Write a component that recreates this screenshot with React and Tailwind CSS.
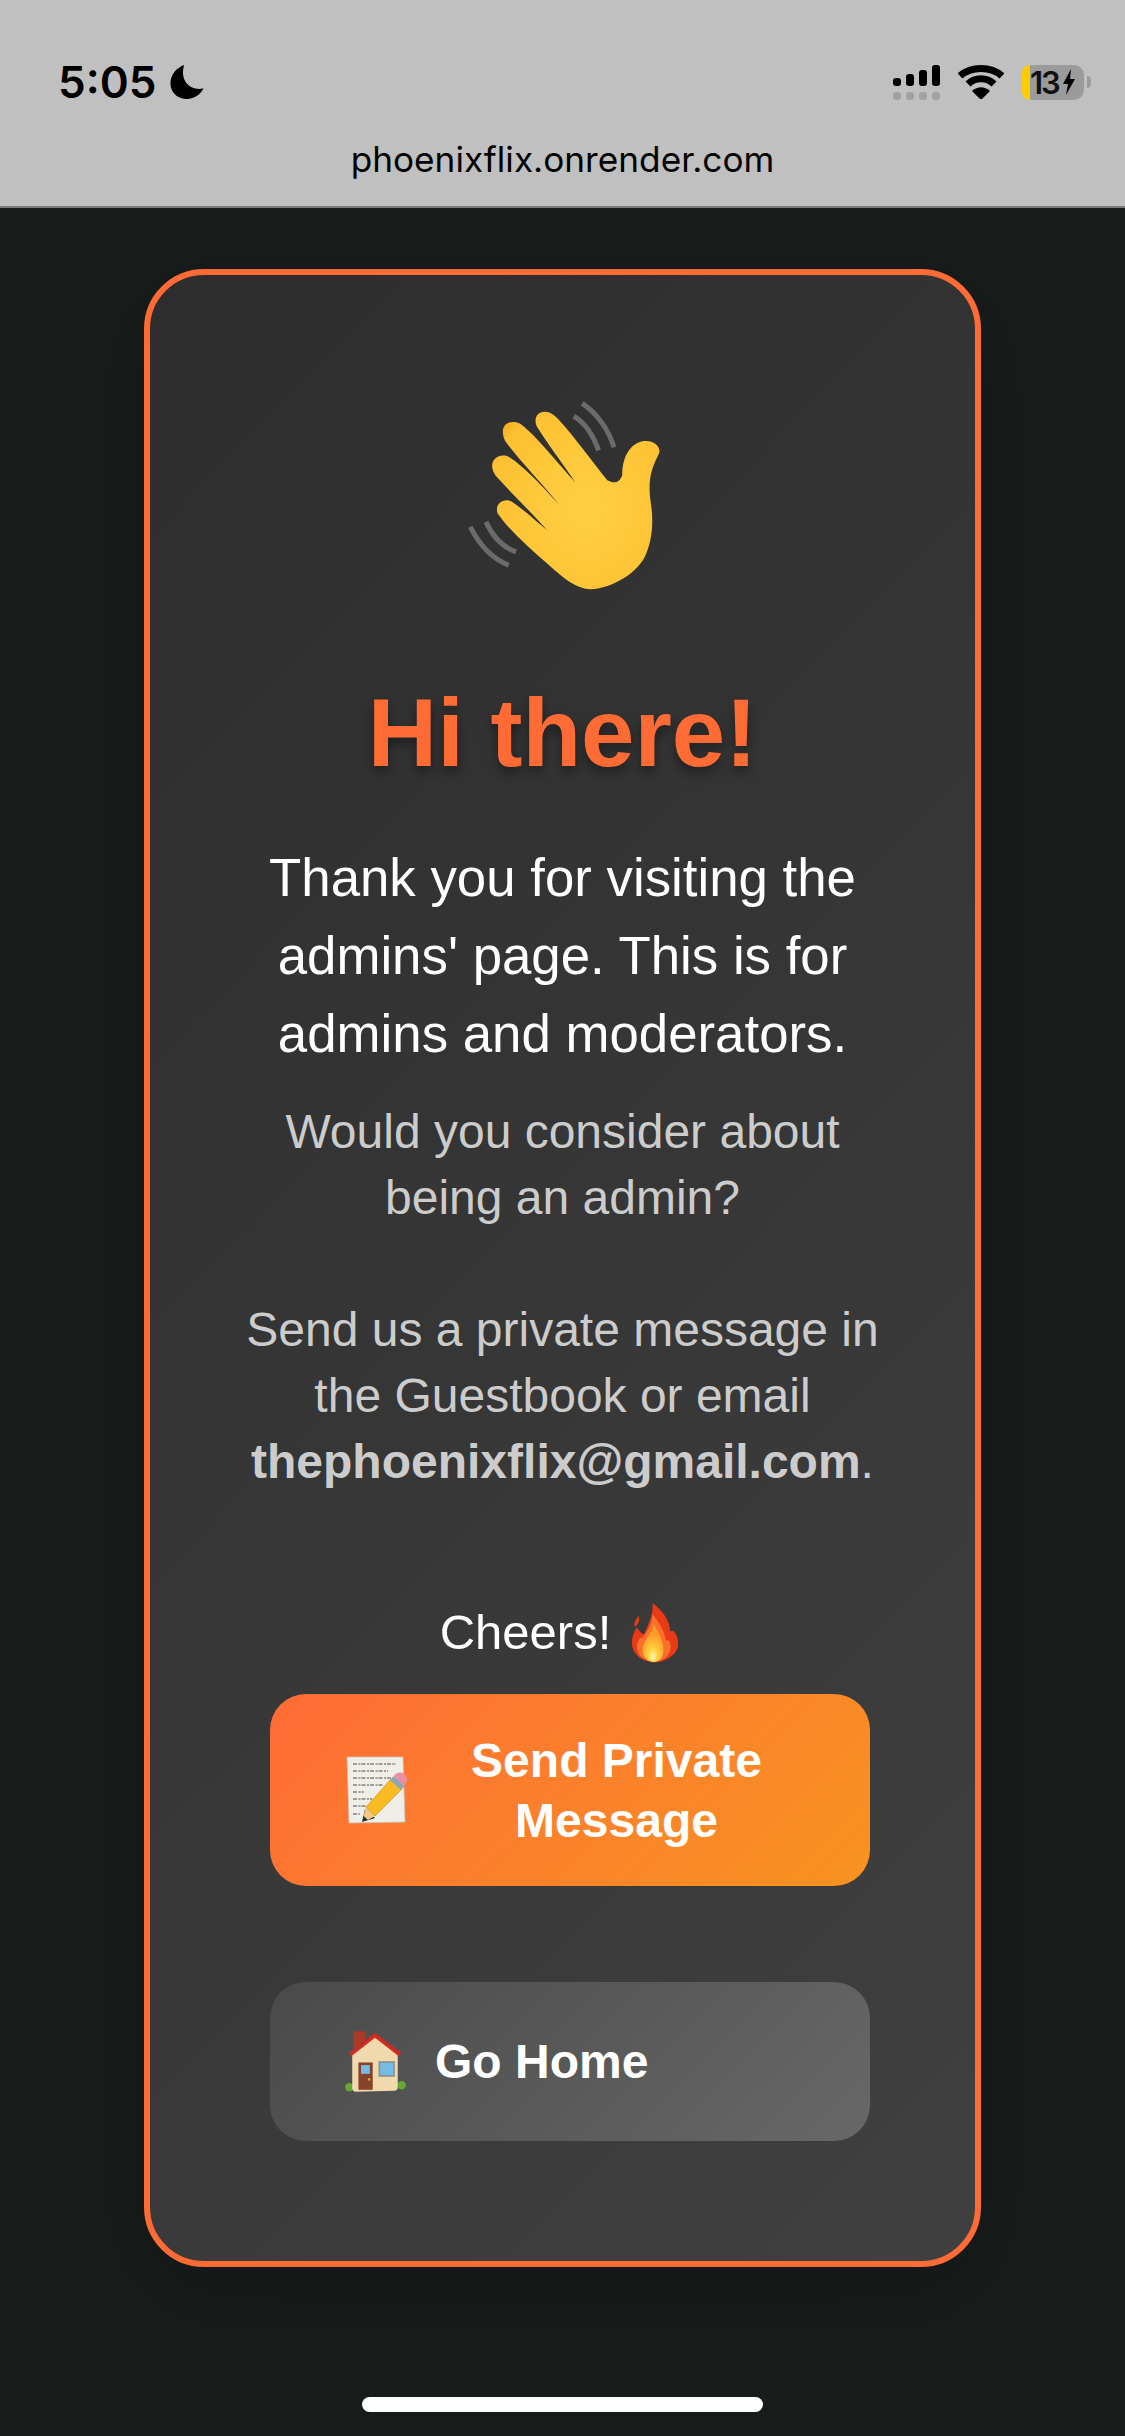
const Hand = () => (
  <svg viewBox="140 95 590 575" className="w-[197px] h-[192px] ml-[5px]">
    <defs>
      <radialGradient id="hg" cx="0.56" cy="0.54" r="0.72">
        <stop offset="0" stopColor="#ffd044" />
        <stop offset="0.84" stopColor="#fdc032" />
        <stop offset="1" stopColor="#ef9f14" />
      </radialGradient>
    </defs>
    <g fill="none" stroke="#6b6b6b" strokeWidth="15">
      <path d="M150 475 C175 525 215 570 265 590" />
      <path d="M197 460 C215 500 245 535 287 550" />
      <path d="M485 105 C530 135 565 185 580 237" />
      <path d="M460 143 C495 165 520 205 534 246" />
    </g>
    <path
      fill="url(#hg)"
      d="M232 435 C222 410 245 388 272 398 C300 415 350 460 382 487 C340 440 270 370 226 322 C200 285 225 255 258 262 C290 275 360 345 415 408 C370 350 290 270 254 217 C235 175 260 155 290 162 C320 170 400 270 465 342 C430 290 370 210 348 172 C335 135 370 120 395 137 C420 150 500 260 560 335 C580 345 595 345 605 320 C605 270 625 225 670 218 C700 215 722 235 715 255 C695 295 680 330 690 400 C700 460 695 520 670 570 C640 620 570 660 510 662 C460 660 420 620 380 585 C330 540 270 490 232 435 Z"
    />
  </svg>
);

const Flame = () => (
  <svg viewBox="55 30 155 190" className="w-[52px] h-[63px]">
    <defs>
      <radialGradient id="fg" cx="0.5" cy="0.85" r="0.6">
        <stop offset="0" stopColor="#fff8c0" />
        <stop offset="0.35" stopColor="#ffd23c" />
        <stop offset="1" stopColor="#ff9a2a" />
      </radialGradient>
    </defs>
    <path fill="#e83a16" d="M125 36 C150 55 178 85 178 122 C190 112 205 140 202 165 C198 195 160 215 130 215 C100 215 65 195 63 160 C62 135 72 118 78 110 C85 120 92 130 100 130 C112 100 128 75 125 36 Z" />
    <path fill="#e83a16" d="M83 75 C88 90 82 100 72 108 C66 100 74 85 83 75 Z" />
    <path fill="#f9702a" d="M125 70 C145 95 162 120 165 150 C175 145 180 155 180 170 C178 195 155 213 130 213 C100 213 78 195 78 168 C78 150 88 140 95 140 C105 125 122 110 125 70 Z" />
    <path fill="url(#fg)" d="M128 100 C145 125 158 150 158 178 C158 200 145 214 130 214 C110 214 95 198 95 178 C95 150 120 135 128 100 Z" />
  </svg>
);

const Memo = () => (
  <svg viewBox="0 0 62 68" className="w-[62px] h-[68px]">
    <path fill="#efeee9" stroke="#c9c4b8" strokeWidth="0.8" d="M1 1 L57 1 L59 66 L3 67 Z" />
    <g fill="none" stroke="#4c4a46" strokeWidth="1" strokeDasharray="4 1.5 2 1">
      <path d="M7 8 H50" /><path d="M7 15 H42" /><path d="M7 22 H50" /><path d="M7 29 H38" /><path d="M7 36 H18" /><path d="M7 43 H26" /><path d="M7 50 H20" /><path d="M7 58 H14" />
    </g>
    <path fill="#2d2a26" d="M16 66 L19 53 L29 62 Z" />
    <path fill="#efc98a" d="M17.5 60 L20 51 L29 60 L22 64 Z" />
    <path fill="#f9bb22" stroke="#c98a10" strokeWidth="0.6" d="M20 51 L45 23 L56 33 L29 60 Z" />
    <path fill="#8fa7b5" d="M44 24 L48 20 L59 30 L55 34 Z" />
    <path fill="#ea8f9b" d="M48 20 C52 15 57 16 60 20 C62 24 61 26 58 30 Z" />
  </svg>
);

const House = () => (
  <svg viewBox="40 45 190 200" className="w-[62px] h-[65px]">
    <circle cx="56" cy="224" r="13" fill="#66a82e" />
    <circle cx="217" cy="218" r="13" fill="#66a82e" />
    <rect x="68" y="52" width="36" height="50" fill="#a83a26" />
    <path fill="#f1d9ae" d="M65 120 L135 65 L205 120 L205 225 C205 232 200 235 195 235 L75 238 C70 238 65 234 65 228 Z" />
    <path fill="none" stroke="#d42c22" strokeWidth="13" strokeLinejoin="miter" d="M58 124 L135 64 L212 124" />
    <path fill="none" stroke="#3d3b38" strokeWidth="2" d="M52 130 L135 57 L218 130" opacity="0.5" />
    <rect x="84" y="148" width="44" height="84" fill="#85432a" />
    <rect x="92" y="156" width="27" height="27" fill="#74bce4" />
    <circle cx="117" cy="200" r="4" fill="#e0a83a" />
    <rect x="146" y="144" width="50" height="48" fill="#8c8f92" />
    <rect x="151" y="149" width="40" height="38" fill="#74bce4" />
  </svg>
);

export default function App() {
  return (
    <div className="w-[1125px] h-[2436px] flex flex-col bg-[#181d1c] overflow-hidden relative" style={{ fontFamily: '"Liberation Sans", Arial, sans-serif' }}>
      <header className="h-[208px] shrink-0 bg-[#c0c0c0] border-b-2 border-[#777b7a] relative">
        <div className="flex items-center justify-between pl-[58px] pr-[34px] pt-[60px] h-[104px]">
          <div className="flex items-center gap-[14px] text-black">
            <span className="text-[44px] leading-[44px] font-semibold" style={{ fontFamily: 'Inter, sans-serif' }}>5:05</span>
            <svg viewBox="0 0 34 36" className="w-[34px] h-[35px]">
              <path fill="#000" d="M14 0 C6 3 0 10 0 19 C0 28 7 35 17 35 C25 35 31 30 34 24 C22 27 9 18 14 0 Z" />
            </svg>
          </div>
          <div className="flex items-center gap-[18px]">
            <svg viewBox="0 0 47 35" className="w-[47px] h-[35px]">
              <rect x="0" y="13" width="8" height="8" rx="3" fill="#000" />
              <rect x="13" y="9" width="8" height="12" rx="3" fill="#000" />
              <rect x="26" y="5" width="8" height="16" rx="3" fill="#000" />
              <rect x="39" y="0" width="8" height="21" rx="3" fill="#000" />
              <rect x="0" y="27" width="8" height="8" rx="3" fill="#a2a2a2" />
              <rect x="13" y="27" width="8" height="8" rx="3" fill="#a2a2a2" />
              <rect x="26" y="27" width="8" height="8" rx="3" fill="#a2a2a2" />
              <rect x="39" y="27" width="8" height="8" rx="3" fill="#a2a2a2" />
            </svg>
            <svg viewBox="0 0 46 34" className="w-[46px] h-[34px]">
              <path fill="none" stroke="#000" strokeWidth="7" d="M2 11 C13 1 33 1 44 11" />
              <path fill="none" stroke="#000" strokeWidth="7" d="M10 19 C17 12 29 12 36 19" />
              <path fill="#000" d="M14 26 C20 21 26 21 32 26 L23 35 Z" />
            </svg>
            <div className="flex items-center gap-[3px]">
              <div className="w-[62px] h-[35px] rounded-[10px] bg-[#9b9b9b] flex items-center">
                <div className="w-[8px] h-full shrink-0 rounded-l-[10px] bg-[#ffcc00]" />
                <span className="text-[31px] leading-none font-semibold text-[#111] tracking-[-2px]" style={{ fontFamily: 'Inter, sans-serif' }}>13</span>
                <svg viewBox="0 0 14 26" className="w-[14px] h-[26px] ml-[3px] shrink-0">
                  <path fill="#000" d="M9 0 L1 15 L6 15 L4 26 L13 10 L8 10 Z" />
                </svg>
              </div>
              <div className="w-[4px] h-[12px] rounded-r-[4px] bg-[#9b9b9b]" />
            </div>
          </div>
        </div>
        <div className="text-center text-black text-[35.2px] leading-[44px] mt-[33px]" style={{ fontFamily: 'Inter, sans-serif' }}>phoenixflix.onrender.com</div>
      </header>

      <main className="flex-1 pl-[144px] pt-[61px]">
        <div className="w-[837px] h-[1998px] rounded-[60px] border-[6px] border-[#ff6b35] bg-linear-135 from-[#2d2d2d] to-[#404040] shadow-[0_24px_90px_rgba(0,0,0,0.22)] flex flex-col items-center pt-[125px]">
          <Hand />
          <h1 className="mt-[86px] text-[96px] leading-[110px] font-bold text-[#ff6b35] [text-shadow:0_6px_12px_rgba(0,0,0,0.4)]">Hi there!</h1>
          <p className="mt-[51px] w-[640px] text-center text-[52.8px] leading-[78px] text-white">
            Thank you for visiting the admins' page. This is for admins and moderators.
          </p>
          <p className="mt-[26px] w-[640px] text-center text-[48px] leading-[66px] text-[#cccccc]">
            Would you consider about being an admin?
          </p>
          <p className="mt-[66px] w-[640px] text-center text-[48px] leading-[66px] text-[#cccccc]">
            Send us a private message in the Guestbook or email <strong className="font-bold">thephoenixflix@gmail.com</strong>.
          </p>
          <div className="mt-[98px] flex items-center gap-[18px] pr-[4px] text-[49px] leading-[78px] text-white">
            <span>Cheers!</span>
            <Flame />
          </div>
          <div className="self-start ml-[120px] mt-[23px] w-[600px] flex flex-col gap-[96px]">
            <a className="h-[192px] rounded-[36px] bg-linear-135 from-[#ff6b35] to-[#f7931e] flex items-center pl-[76px] pr-[75px] text-white font-bold text-[48px] leading-[60px]">
              <Memo />
              <span className="flex-1 text-center ml-[30px] pt-[2px]">Send Private Message</span>
            </a>
            <a className="h-[159px] rounded-[36px] bg-linear-135 from-[#4a4a4a] to-[#686868] flex items-center pl-[74px] text-white font-bold text-[48px] leading-[60px]">
              <House />
              <span className="ml-[29px]">Go Home</span>
            </a>
          </div>
        </div>
      </main>

      <div className="absolute left-[362px] top-[2397px] w-[401px] h-[15px] rounded-full bg-white" />
    </div>
  );
}
